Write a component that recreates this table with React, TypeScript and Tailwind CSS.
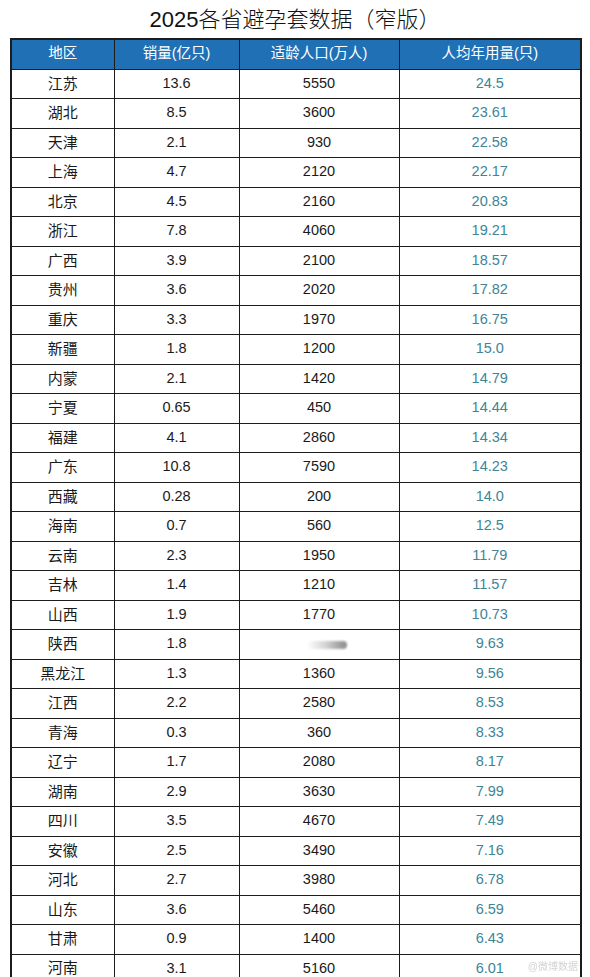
import React from 'react'

type Row = [string, string, string, string]

const rows: Row[] = [
  ['江苏', '13.6', '5550', '24.5'],
  ['湖北', '8.5', '3600', '23.61'],
  ['天津', '2.1', '930', '22.58'],
  ['上海', '4.7', '2120', '22.17'],
  ['北京', '4.5', '2160', '20.83'],
  ['浙江', '7.8', '4060', '19.21'],
  ['广西', '3.9', '2100', '18.57'],
  ['贵州', '3.6', '2020', '17.82'],
  ['重庆', '3.3', '1970', '16.75'],
  ['新疆', '1.8', '1200', '15.0'],
  ['内蒙', '2.1', '1420', '14.79'],
  ['宁夏', '0.65', '450', '14.44'],
  ['福建', '4.1', '2860', '14.34'],
  ['广东', '10.8', '7590', '14.23'],
  ['西藏', '0.28', '200', '14.0'],
  ['海南', '0.7', '560', '12.5'],
  ['云南', '2.3', '1950', '11.79'],
  ['吉林', '1.4', '1210', '11.57'],
  ['山西', '1.9', '1770', '10.73'],
  ['陕西', '1.8', '', '9.63'],
  ['黑龙江', '1.3', '1360', '9.56'],
  ['江西', '2.2', '2580', '8.53'],
  ['青海', '0.3', '360', '8.33'],
  ['辽宁', '1.7', '2080', '8.17'],
  ['湖南', '2.9', '3630', '7.99'],
  ['四川', '3.5', '4670', '7.49'],
  ['安徽', '2.5', '3490', '7.16'],
  ['河北', '2.7', '3980', '6.78'],
  ['山东', '3.6', '5460', '6.59'],
  ['甘肃', '0.9', '1400', '6.43'],
  ['河南', '3.1', '5160', '6.01'],
]

const headers = ['地区', '销量(亿只)', '适龄人口(万人)', '人均年用量(只)']

const cell = 'border-[1.5px] border-[#1c1c1c] text-center align-middle p-0'

export default function App() {
  return (
    <div
      className="relative h-[977px] w-[590px] overflow-hidden bg-white"
      style={{ fontFamily: '"Liberation Sans", "Noto Sans CJK SC", sans-serif' }}
    >
      <h1 className="h-[38px] pt-[6px] text-center text-[22px] leading-[28px] font-light text-[#111]">
        2025各省避孕套数据（窄版）
      </h1>
      <table className="ml-[10px] w-[570px] table-fixed border-collapse border-2 border-[#1c1c1c]">
        <colgroup>
          <col className="w-[103px]" />
          <col className="w-[125px]" />
          <col className="w-[160px]" />
          <col className="w-[182px]" />
        </colgroup>
        <thead>
          <tr className="h-[30px] bg-[#2070b6]">
            {headers.map((h) => (
              <th key={h} className={`${cell} text-[14.5px] font-normal text-white`}>
                {h}
              </th>
            ))}
          </tr>
        </thead>
        <tbody>
          {rows.map(([area, sales, pop, avg]) => (
            <tr key={area} className="h-[29.5px] text-[14.5px] text-[#1a1a1a]">
              <td className={`${cell} text-[15px]`}>{area}</td>
              <td className={cell}>{sales}</td>
              <td className={cell}>
                {pop || (
                  <span className="ml-[16px] inline-block h-[8px] w-[40px] rounded-full bg-gradient-to-r from-transparent via-[#cfcfcf] to-[#8a8a8a] align-middle blur-[1px]" />
                )}
              </td>
              <td className={`${cell} text-[#3d8597]`}>{avg}</td>
            </tr>
          ))}
        </tbody>
      </table>
      <div className="absolute right-[12px] bottom-[3px] text-[10px] text-[#c8c8c8] opacity-80">
        @微博数据
      </div>
    </div>
  )
}
